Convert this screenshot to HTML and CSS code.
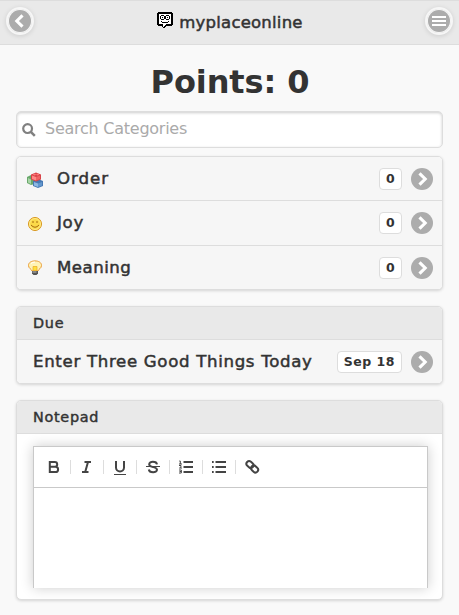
FILE: index.html
```html
<!DOCTYPE html>
<html lang="en">
<head>
<meta charset="utf-8">
<title>myplaceonline</title>
<link rel="stylesheet" href="styles.css">
</head>
<body>
<svg class="defs" width="0" height="0">
  <symbol id="chev" viewBox="0 0 22 22"><circle cx="11" cy="11" r="11" fill="#acacac"/><path d="M8.5 5.3l5.700 5.700-5.700 5.700" fill="none" stroke="#fff" stroke-width="3.100"/></symbol>
</svg>
<header class="top">
  <a class="round"><svg class="flip" width="22" height="22"><use href="#chev"/></svg></a>
  <h1 class="brand">
    <svg width="16" height="16" viewBox="0 0 16 16" shape-rendering="crispEdges"><path d="M1 0h14v1h1v12h-1v1H9v1H8v1H6v-1H5v-1H1v-1H0V1h1z"/><path fill="#fff" d="M2 2h12v10H9v1H8v1H7v1H6v-3H2z"/><path d="M4 3h3v1H4zM3 4h1v3H3zM4 7h3v1H4zM7 4h1v3H7zM9 3h3v1H9zM8 4h1v3H8zM12 4h1v3h-1zM9 7h3v1H9zM5 5h1v1H5zM10 5h1v1h-1zM4 9h1v1H4zM5 10h6v1H5zM11 9h1v1h-1z"/></svg>
    <span>myplaceonline</span>
  </h1>
  <a class="round"><svg width="22" height="22" viewBox="0 0 22 22"><circle cx="11" cy="11" r="11" fill="#acacac"/><path d="M4 7h14M4 11h14M4 15h14" stroke="#fff" stroke-width="2"/></svg></a>
</header>
<main>
  <h2 class="points">Points: 0</h2>
  <div class="search">
    <svg width="14" height="14" viewBox="0 0 14 14" fill="none" stroke="#808080"><circle cx="5.600" cy="5.600" r="4.400" stroke-width="2.200"/><path d="M8.800 8.800l4 4" stroke-width="2.500"/></svg>
    <span>Search Categories</span>
  </div>
  <section class="card list">
    <div class="row r1">
      <svg width="16" height="16" viewBox="0 0 16 16"><path d="M0 5l4-2 4 2v7l-4 1-4-2z" fill="#69a86b"/><path d="M1 6l3 1.500V12L1 10.500z" fill="#a9d4a7"/><path d="M6 9l5-2 5 2v5l-5 2-5-2z" fill="#4779b4"/><path d="M7 10l4 1.500V15l-4-1.500z" fill="#8db8e2"/><path d="M11 11.500l4-1.500v3.500L11 15z" fill="#6397cd"/><path d="M4 2.500L9 .5l5 2v5L9 9.500 4 7.500z" fill="#d84348"/><path d="M5 3.500l4 1.500v3.500L5 7z" fill="#ff8886"/><path d="M9 5l4-1.500V7L9 8.500z" fill="#ef6262"/><ellipse cx="7.500" cy="2.600" rx="1.500" ry=".8" fill="#f77"/><ellipse cx="10.700" cy="2.600" rx="1.500" ry=".8" fill="#f77"/></svg>
      <span class="name order">Order</span><span class="badge zero">0</span><svg width="22" height="22"><use href="#chev"/></svg>
    </div>
    <div class="row r2">
      <svg width="16" height="16" viewBox="0 0 16 16"><circle cx="8" cy="8" r="6.500" fill="#fbd949" stroke="#d7941b"/><circle cx="8" cy="8" r="5.500" fill="none" stroke="#ffef9b" stroke-width=".8"/><path d="M6 5v2M10 5v2M4 9q4 4.500 8 0" fill="none" stroke="#a66a10"/></svg>
      <span class="name">Joy</span><span class="badge zero">0</span><svg width="22" height="22"><use href="#chev"/></svg>
    </div>
    <div class="row r3">
      <svg width="16" height="16" viewBox="0 0 16 16"><path d="M5 11C4.500 9 1.500 8.500 1.500 5.400 1.500 2.400 4.500.9 8 .9s6.500 1.500 6.500 4.500c0 3.100-3 3.600-3.500 5.600z" fill="#fff3b5" stroke="#e99b35"/><path d="M6 10.500V6.500h4v4z" fill="#ffe03c" stroke="#e9aa22" stroke-width=".7"/><path d="M4 3.500Q6 2 8 2" stroke="#fff" fill="none"/><path d="M5 11h6v2.500L9.500 15h-3L5 13.500z" fill="#555"/><path d="M5.500 12h4" stroke="#bbb"/></svg>
      <span class="name meaning">Meaning</span><span class="badge zero">0</span><svg width="22" height="22"><use href="#chev"/></svg>
    </div>
  </section>
  <section class="card">
    <h3 class="head">Due</h3>
    <div class="row due"><span class="name">Enter Three Good Things Today</span><span class="badge">Sep 18</span><svg width="22" height="22"><use href="#chev"/></svg></div>
  </section>
  <section class="card">
    <h3 class="head">Notepad</h3>
    <div class="pad">
      <div class="editor">
        <div class="tools">
          <i><svg viewBox="0 0 14 14"><path d="M2.800 2h5a2.300 2.300 0 0 1 0 4.800h-5zM2.800 6.800h5.700a2.500 2.500 0 0 1 0 5.200H2.800z"/></svg></i>
          <i><svg viewBox="0 0 14 14"><path d="M4.500 2h6.500M2 12h6.500M8 2L5.200 12"/></svg></i>
          <i><svg viewBox="0 0 14 14"><path d="M3 1v6.500a4 4 0 0 0 8 0V1"/><path class="thin" d="M1 14.500h12"/></svg></i>
          <i><svg viewBox="0 0 14 14"><path d="M11 4.300C10.500 1 3.200 1 3.200 4.200c0 2 2 2.300 3.800 2.800s4 .9 4 2.800c0 3.300-7.600 3.300-8.200-.3"/><path class="thin" d="M0 6.500h14"/></svg></i>
          <i><svg viewBox="0 0 14 14"><path d="M4.500 2H14M4.500 7H14M4.500 12H14"/><path class="thin" d="M.3 1h1v3M0 4h3M0 5.500h2v1.300L.5 8H3M0 10h2.300v3H0M.5 11.500h2"/></svg></i>
          <i><svg viewBox="0 0 14 14"><path d="M3.500 2H14M3.500 7H14M3.500 12H14M0 2h1.700M0 7h1.700M0 12h1.700"/></svg></i>
          <i><svg viewBox="0 0 14 14"><g transform="rotate(42 6.500 7)"><rect x="-.8" y="4.200" width="7.600" height="5.400" rx="2.700"/><rect x="5.600" y="4.400" width="7.600" height="5.400" rx="2.700"/></g></svg></i>
        </div>
        <div class="canvas"></div>
      </div>
    </div>
  </section>
</main>
</body>
</html>
```
FILE: styles.css
```css
* { box-sizing: border-box; }
body { margin: 0; height: 615px; overflow: hidden; background: #f9f9f9; color: #333; font: 16px "DejaVu Sans", sans-serif; }
svg { display: block; flex: none; }
.defs { display: none; }
h1, h2, h3 { margin: 0; font-weight: 400; }
.top { display: flex; height: 45px; padding: 0 8px; align-items: flex-start; justify-content: space-between; background: #e9e9e9; border: solid #ddd; border-width: 1px 0; }
.round { display: flex; width: 24px; height: 24px; margin-top: 8px; align-items: center; justify-content: center; border-radius: 50%; outline: 2px solid #f6f6f6; box-shadow: 0 1px 5px 2px rgba(0,0,0,.12); background: #f6f6f6; }
.flip { transform: scaleX(-1); }
.brand { display: flex; gap: 6px; padding: 11px 0 0 1px; font-size: 16.5px; line-height: 22px; letter-spacing: .22px; -webkit-text-stroke: .5px #333; }
.brand svg { -webkit-text-stroke: 0; }
main { padding: 0 16px; }
.points { height: 66px; padding: 18px 0 0 1px; line-height: 38px; text-align: center; font-size: 32px; font-weight: 700; letter-spacing: -.1px; }
.search { display: flex; height: 37px; margin-bottom: 8px; padding: 0 5px; gap: 9px; align-items: center; background: #fff; border: 1px solid #ddd; border-radius: 5px; box-shadow: inset 0 1px 3px rgba(0,0,0,.2); color: #aaa; letter-spacing: -.25px; }
.search span { position: relative; top: -1px; }
.card { margin-bottom: 16px; background: #fff; border: 1px solid #ddd; border-radius: 5px; box-shadow: 0 1px 3px rgba(0,0,0,.15); overflow: hidden; }
.row { display: flex; height: 43px; padding: 0 9px 0 10px; align-items: center; background: #f6f6f6; }
.r2, .r3 { height: 45px; border-top: 1px solid #ddd; }
.r2 { padding-bottom: 1px; }
.r3 { height: 44px; }
.r1 > svg:first-child, .r2 > svg:first-child, .r3 > svg:first-child { margin-right: 14px; }
.row:not(.due) > svg:first-child { position: relative; top: 1px; }
.r3 > svg:first-child { margin-top: -2px; }
.name { flex: 1; white-space: nowrap; font-size: 16.6px; letter-spacing: .68px; -webkit-text-stroke: .5px #333; }
.order { letter-spacing: 1px; }
.meaning { letter-spacing: .5px; }
.badge { height: 22px; margin-right: 9px; padding: 0 6px; border: 1px solid #ddd; border-radius: 4px; background: #fff; font-size: 12.5px; font-weight: 700; line-height: 19px; letter-spacing: .5px; }
.zero { width: 23px; padding: 0; text-align: center; }
.head { height: 33px; padding-left: 16px; line-height: 32px; font-size: 14.4px; letter-spacing: .72px; -webkit-text-stroke: .45px #333; background: #e9e9e9; border-bottom: 1px solid #ddd; }
.due { padding-left: 16px; }
.pad { height: 165px; padding: 12px 14px 11px 16px; }
.editor { height: 142px; border: 1px solid #c9c9c9; border-bottom: 0; background: #fff; box-shadow: 0 0 12px rgba(0,0,0,.2); }
.tools { display: flex; height: 41px; padding: 0 4px; align-items: center; border-bottom: 1px solid #c9c9c9; }
.tools i { display: flex; width: 33px; height: 14px; align-items: center; justify-content: center; border-right: 1px solid #ddd; }
.tools i:last-child { border-right: 0; }
.tools svg { width: 14px; height: 14px; overflow: visible; fill: none; stroke: #444; stroke-width: 2; }
.tools .thin { stroke-width: 1; }
```
